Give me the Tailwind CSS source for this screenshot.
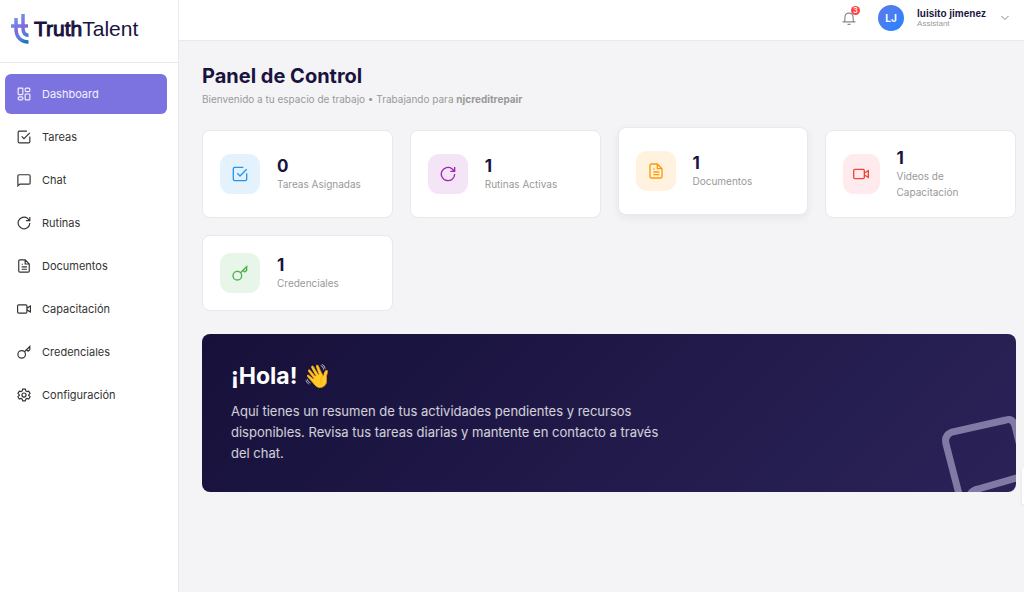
<!DOCTYPE html>
<html lang="es">
<head>
    <meta charset="UTF-8">
    <meta name="viewport" content="width=device-width, initial-scale=1.0">
    <script src="https://cdn.jsdelivr.net/npm/@tailwindcss/browser@4"></script>
    <title>TruthTalent - Panel de Control</title>
</head>
<body class="bg-[#f4f4f6] font-['Inter',sans-serif] text-[#1a1340]">

    <!-- Shared icons -->
    <svg class="hidden">
        <symbol id="i-dashboard" viewBox="0 0 24 24"><rect x="2" y="2" width="8" height="11" rx="1"/><rect x="14" y="2" width="8" height="6" rx="2"/><rect x="2" y="17" width="8" height="5" rx="2"/><rect x="14" y="12" width="8" height="10" rx="1"/></symbol>
        <symbol id="i-task" viewBox="0 0 24 24"><path d="M17 2H4a2 2 0 0 0-2 2v16a2 2 0 0 0 2 2h16a2 2 0 0 0 2-2V11M8 11l4 4L22 5"/></symbol>
        <symbol id="i-chat" viewBox="0 0 24 24"><path d="M1.500 22V5a2 2 0 0 1 2-2h17a2 2 0 0 1 2 2v12a2 2 0 0 1-2 2H5z"/></symbol>
        <symbol id="i-refresh" viewBox="0 0 24 24"><path d="M22 12A10 10 0 1 1 18 4L21 7M22 1.500v6.500h-6.500"/></symbol>
        <symbol id="i-document" viewBox="0 0 24 24"><path d="M14 1.500H5a2 2 0 0 0-2 2v17a2 2 0 0 0 2 2h14a2 2 0 0 0 2-2V8.500zM14 1.500v7h7M8 9h2M8 13.500h9M8 17.500h9"/></symbol>
        <symbol id="i-video" viewBox="0 0 24 24"><rect x="1" y="5" width="16" height="14" rx="2"/><path d="M17 10.500L23 7v10L17 13.500"/></symbol>
        <symbol id="i-key" viewBox="0 0 24 24"><circle cx="8" cy="16" r="6.500"/><path d="M12.800 11.500L22 2.500V8l-3 2.500-3-2.500"/></symbol>
        <symbol id="i-settings" viewBox="0 0 24 24"><path d="M9.700 2h4.600l.8 3 2 1.200 3-.9 2.300 4-2.200 2.200v1.200l2.200 2.200-2.300 4-3-.9-2 1.200-.8 3H9.700l-.8-3-2-1.200-3 .9-2.300-4 2.200-2.200v-1.200L1.600 9.300l2.300-4 3 .9 2-1.200z"/><circle cx="12" cy="12" r="3.500"/></symbol>
    </svg>

    <div class="flex min-h-screen">
        <aside class="w-[179px] shrink-0 bg-white border-r border-[#e9e9ec]">
            <div class="h-[63px] flex items-center gap-[5px] pl-[11px] pb-1 border-b border-[#e9e9ec]">
                <svg class="w-[18px] h-[32px] shrink-0" viewBox="0 0 18 32" fill="none" stroke-width="3.500">
                    <defs>
                        <linearGradient id="logo" gradientUnits="userSpaceOnUse" x1="2" y1="6" x2="18" y2="28">
                            <stop offset="0" stop-color="#6a9be8"/>
                            <stop offset=".45" stop-color="#8068dc"/>
                            <stop offset=".7" stop-color="#5c7fdc"/>
                            <stop offset="1" stop-color="#1672b4"/>
                        </linearGradient>
                    </defs>
                    <path stroke="url(#logo)" d="M5 5v11c0 8 5 13 12.500 13M12 1v14c0 4.500 1.500 7.200 5.500 7.200M0 13h17"/>
                </svg>
                <a href="#" class="font-['Liberation_Sans',sans-serif] text-[21px] leading-7"><span class="[-webkit-text-stroke:1px_#1a1340]">Truth</span><span>Talent</span></a>
            </div>
            <nav class="flex flex-col gap-[3px] pt-[11px] pl-[5px] pr-[11px] text-[11px] leading-4 text-[#333]">
                <a href="#" class="h-10 px-3 flex items-center gap-[11px] rounded-md bg-[#7d73e0] text-white/90"><svg class="size-[14px]" fill="none" stroke="currentColor" stroke-width="2"><use href="#i-dashboard"/></svg>Dashboard</a>
                <a href="#" class="h-10 px-3 flex items-center gap-[11px] rounded-md"><svg class="size-[14px]" fill="none" stroke="currentColor" stroke-width="2"><use href="#i-task"/></svg>Tareas</a>
                <a href="#" class="h-10 px-3 flex items-center gap-[11px] rounded-md"><svg class="size-[14px]" fill="none" stroke="currentColor" stroke-width="2"><use href="#i-chat"/></svg>Chat</a>
                <a href="#" class="h-10 px-3 flex items-center gap-[11px] rounded-md"><svg class="size-[14px]" fill="none" stroke="currentColor" stroke-width="2"><use href="#i-refresh"/></svg>Rutinas</a>
                <a href="#" class="h-10 px-3 flex items-center gap-[11px] rounded-md"><svg class="size-[14px]" fill="none" stroke="currentColor" stroke-width="2"><use href="#i-document"/></svg>Documentos</a>
                <a href="#" class="h-10 px-3 flex items-center gap-[11px] rounded-md"><svg class="size-[14px]" fill="none" stroke="currentColor" stroke-width="2"><use href="#i-video"/></svg>Capacitación</a>
                <a href="#" class="h-10 px-3 flex items-center gap-[11px] rounded-md"><svg class="size-[14px]" fill="none" stroke="currentColor" stroke-width="2"><use href="#i-key"/></svg>Credenciales</a>
                <a href="#" class="h-10 px-3 flex items-center gap-[11px] rounded-md"><svg class="size-[14px]" fill="none" stroke="currentColor" stroke-width="2"><use href="#i-settings"/></svg>Configuración</a>
            </nav>
        </aside>

        <div class="flex-1 min-w-0">
            <header class="h-[41px] pb-1 pr-[14px] flex items-center justify-end bg-white border-b border-[#e9e9ec]">
                <button type="button" aria-label="Notificaciones" class="relative mr-[22px]">
                    <svg class="size-[14px]" viewBox="0 0 24 24" fill="none" stroke="#888" stroke-width="2"><path d="M1 18.500h22M4 18.500c1.200-2.500 1-5 1-8a7 7 0 0 1 14 0c0 3 0 5.500 1 8M9.500 23h5"/></svg>
                    <span class="absolute -top-[5px] -right-1 size-[9px] rounded-full bg-[#ff4145] text-white text-[7px] leading-[9px] font-semibold text-center">3</span>
                </button>
                <button type="button" class="flex items-center text-left">
                    <span class="size-[26px] mr-[13px] rounded-full bg-linear-135 from-[#5f78ea] to-[#0a84ff] text-white text-[10px] leading-[26px] font-bold text-center">LJ</span>
                    <span class="mr-[14px] font-['Liberation_Sans',sans-serif]">
                        <span class="block text-[10px] leading-[11px] font-bold">luisito jimenez</span>
                        <span class="block text-[8px] leading-[10px] text-[#999]">Assistant</span>
                    </span>
                    <svg class="w-[10px] h-[6px]" viewBox="0 0 10 6" fill="none" stroke="#888"><path d="M1.500 1L5 4.500 8.500 1"/></svg>
                </button>
            </header>

            <main class="pt-[23px] pl-[23px] pr-2">
                <h1 class="text-xl leading-6 font-bold">Panel de Control</h1>
                <p class="mt-[3px] text-[10px] leading-4 text-[#999]">Bienvenido a tu espacio de trabajo • Trabajando para <strong class="font-bold">njcreditrepair</strong></p>

                <div class="mt-[23px] grid grid-cols-4 gap-[17px]">
                    <div class="flex items-center gap-[17px] p-[17px] bg-white border border-[#e9e9ec] rounded-lg">
                        <div class="w-10 h-10 flex items-center justify-center rounded-[11px] bg-[#e3f2fd] text-[#2196f3]"><svg class="size-4" fill="none" stroke="currentColor" stroke-width="2"><use href="#i-task"/></svg></div>
                        <div><p class="text-[17px] leading-5 font-bold">0</p><p class="text-[10px] leading-4 text-[#999]">Tareas Asignadas</p></div>
                    </div>
                    <div class="flex items-center gap-[17px] p-[17px] bg-white border border-[#e9e9ec] rounded-lg">
                        <div class="w-10 h-10 flex items-center justify-center rounded-[11px] bg-[#f3e5f5] text-[#9c27b0]"><svg class="size-4" fill="none" stroke="currentColor" stroke-width="2"><use href="#i-refresh"/></svg></div>
                        <div><p class="text-[17px] leading-5 font-bold">1</p><p class="text-[10px] leading-4 text-[#999]">Rutinas Activas</p></div>
                    </div>
                    <div class="-translate-y-[3px] flex items-center gap-[17px] p-[17px] bg-white border border-[#e9e9ec] rounded-lg shadow-[0_3px_9px_rgba(0,0,0,0.06)]">
                        <div class="w-10 h-10 flex items-center justify-center rounded-[11px] bg-[#fff3e0] text-[#ff9800]"><svg class="size-4" fill="none" stroke="currentColor" stroke-width="2"><use href="#i-document"/></svg></div>
                        <div><p class="text-[17px] leading-5 font-bold">1</p><p class="text-[10px] leading-4 text-[#999]">Documentos</p></div>
                    </div>
                    <div class="flex items-center gap-[17px] p-[17px] bg-white border border-[#e9e9ec] rounded-lg">
                        <div class="w-10 h-10 flex items-center justify-center rounded-[11px] bg-[#ffebee] text-[#f44336]"><svg class="size-4" fill="none" stroke="currentColor" stroke-width="2"><use href="#i-video"/></svg></div>
                        <div><p class="text-[17px] leading-5 font-bold">1</p><p class="text-[10px] leading-4 text-[#999]">Videos de Capacitación</p></div>
                    </div>
                    <div class="flex items-center gap-[17px] p-[17px] bg-white border border-[#e9e9ec] rounded-lg">
                        <div class="w-10 h-10 flex items-center justify-center rounded-[11px] bg-[#e8f5e9] text-[#4caf50]"><svg class="size-4" fill="none" stroke="currentColor" stroke-width="2"><use href="#i-key"/></svg></div>
                        <div><p class="text-[17px] leading-5 font-bold">1</p><p class="text-[10px] leading-4 text-[#999]">Credenciales</p></div>
                    </div>
                </div>

                <section class="relative overflow-hidden mt-[23px] px-[29px] py-7 rounded-lg bg-linear-135 from-[#16103a] to-[#2b2358] text-white">
                    <h2 class="text-[23px] leading-7 font-bold">¡Hola! 👋</h2>
                    <p class="mt-[11px] max-w-[430px] text-[13px] leading-[21px] text-white/80">Aquí tienes un resumen de tus actividades pendientes y recursos disponibles. Revisa tus tareas diarias y mantente en contacto a través del chat.</p>
                    <svg class="absolute right-0 bottom-0 w-[80px] h-[80px]" viewBox="0 0 80 80" fill="none" stroke="#8279a5" stroke-width="7">
                        <path d="M24 86L10 32Q8 23 16 20L70 8Q77 6 79 14L84 34M33 86Q34 79 42 77L84 65"/>
                    </svg>
                </section>
            </main>
        </div>
    </div>

    <!-- Collapsed side tab -->
    <div class="fixed right-0 bottom-[88px] w-[2px] h-9 rounded-l-sm bg-white shadow-[0_1px_3px_rgba(0,0,0,0.1)]"></div>

</body>
</html>
